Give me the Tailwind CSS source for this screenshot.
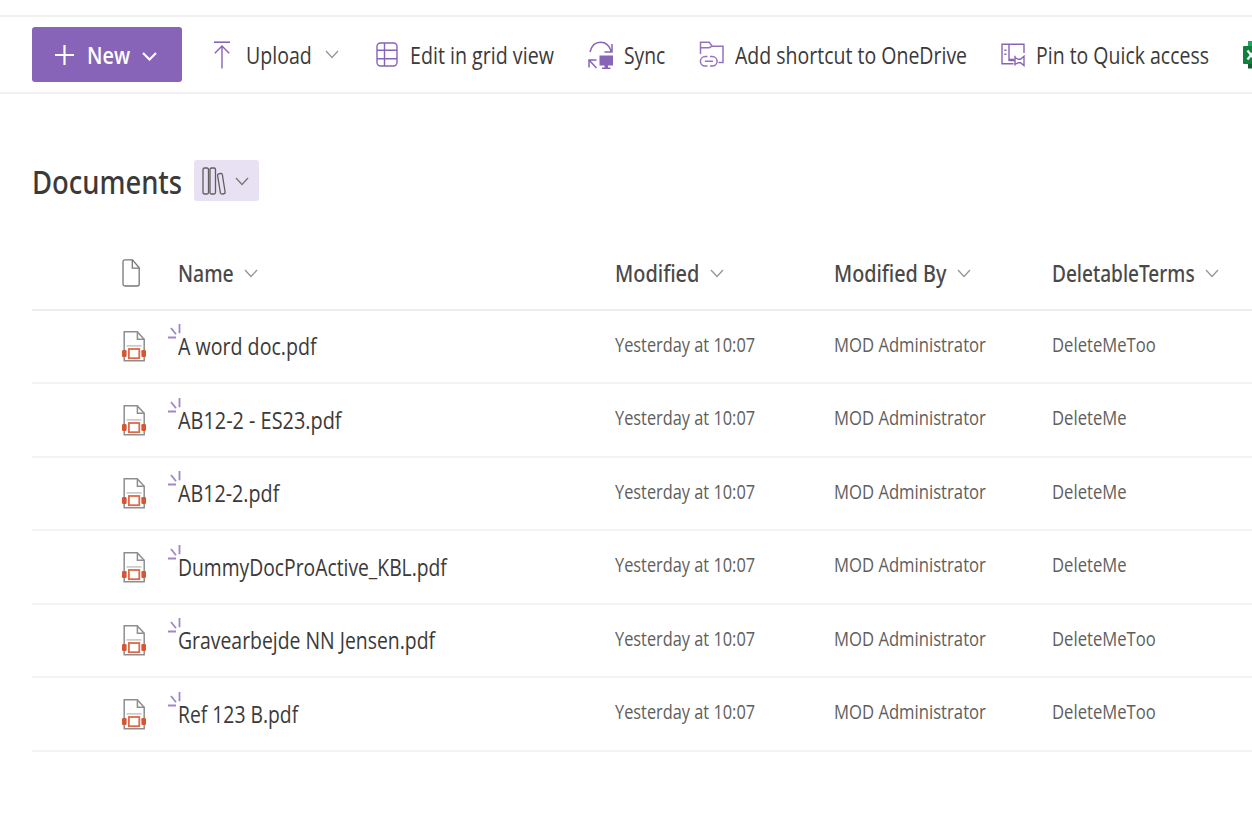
<!DOCTYPE html>
<html lang="en">
<head>
<meta charset="utf-8">
<title>Documents</title>
<script src="https://cdn.jsdelivr.net/npm/@tailwindcss/browser@4"></script>
</head>
<body class="h-[832px] w-[1252px] overflow-hidden bg-white font-['Open_Sans','Noto_Sans',sans-serif] text-[23px] leading-8 text-[#3b3a39]">

<svg class="hidden">
  <symbol id="chev" viewBox="0 0 14 9"><path d="M1 1l6 6.500L13 1" fill="none" stroke="currentColor" stroke-width="1.300"/></symbol>
  <symbol id="pdf" viewBox="0 0 26 32">
    <path d="M3.200 1.700h13l7 7.600v21.500h-20z" fill="#fff" stroke="#8e8e8e" stroke-width="1.500"/>
    <path d="M16.400 1.700v7.600h6.800" fill="none" stroke="#8e8e8e" stroke-width="1.500"/>
    <path d="M5.500 15.900h15" stroke="#c0c0c0" stroke-width="1.400"/>
    <rect x="1" y="20" width="4.600" height="7" rx="1.200" fill="#d65532"/>
    <rect x="20.400" y="20" width="4.600" height="7" rx="1.200" fill="#d65532"/>
    <rect x="7.900" y="19" width="10.400" height="9.200" fill="#fff" stroke="#dc6a49" stroke-width="1.800"/>
  </symbol>
  <symbol id="fresh" viewBox="0 0 14 15"><path d="M0 13.500h8M3 4l5 6.200M11.500 0v9.200" fill="none" stroke="#a085c8" stroke-width="1.800"/></symbol>
</svg>

<div class="h-[15px]"></div>
<nav class="flex h-[79px] items-center border-y-2 border-[#f0f0f0] pl-8">
  <button class="mr-[31px] flex h-[55px] w-[150px] shrink-0 items-center rounded-[3px] bg-[#8764b8] pl-[23px] font-semibold text-white">
    <svg class="h-5 w-[19px]" viewBox="0 0 19 20"><path d="M9.500 0v20M0 10h19" stroke="currentColor" stroke-width="2.200"/></svg>
    <span class="ml-[13px] w-[55px] text-left"><span class="inline-block origin-left scale-x-[.86] whitespace-nowrap">New</span></span>
    <svg class="mt-1 h-[9px] w-[15px]" viewBox="0 0 15 9"><path d="M1 1l6.500 6.500L14 1" fill="none" stroke="currentColor" stroke-width="2.200"/></svg>
  </button>
  <div class="flex w-[163px] shrink-0 items-center">
    <svg class="h-7 w-[18px] shrink-0 text-[#8764b8]" viewBox="0 0 18 28"><path d="M1 1.200h16" stroke="currentColor" stroke-width="1.600"/><path d="M9 27.500V5.500M1.800 12.200L9 5l7.200 7.200" fill="none" stroke="currentColor" stroke-width="1.400"/></svg>
    <span class="ml-[15px] w-[79px]"><span class="inline-block origin-left scale-x-[.85] whitespace-nowrap">Upload</span></span>
    <svg class="h-[9px] w-[14px] shrink-0 text-[#979593]"><use href="#chev"/></svg>
  </div>
  <div class="flex w-[212px] shrink-0 items-center">
    <svg class="h-[25px] w-[22px] shrink-0 text-[#8764b8]" viewBox="0 0 22 25" fill="none" stroke="currentColor" stroke-width="1.400"><rect x="1" y="1" width="20" height="23" rx="3.500"/><path d="M1 8.300h20M1 16.700h20M8.500 1v23"/></svg>
    <span class="ml-3"><span class="inline-block origin-left scale-x-[.854] whitespace-nowrap">Edit in grid view</span></span>
  </div>
  <div class="flex w-[111px] shrink-0 items-center">
    <svg class="h-7 w-[25px] shrink-0 text-[#8764b8]" viewBox="0 0 25 28"><g fill="none" stroke="currentColor" stroke-width="1.500"><path d="M2 11C3.500 4.500 7.500 1.200 12.500 1.200c5 0 9 3.300 10.700 9.300M24 3v8h-7.500M1 26.500V19h7.500M1.500 19.500l7 7.500"/></g><path d="M11.500 14.500H25V24.500h-5v2h2.500V28h-8.500v-1.500H16.500v-2h-5z" fill="currentColor"/></svg>
    <span class="ml-[11px]"><span class="inline-block origin-left scale-x-[.84] whitespace-nowrap">Sync</span></span>
  </div>
  <div class="flex w-[302px] shrink-0 items-center">
    <svg class="h-[27px] w-[25px] shrink-0 text-[#9373c0]" viewBox="0 0 25 27" fill="none" stroke="currentColor" stroke-width="1.500"><path d="M1.500 13V1.200h8.700l3 4H24V21.500h-4.500M1.500 6.700h8.700l3-1.600"/><path d="M8.500 15.500H6.200a4.800 4.800 0 0 0 0 9.600h2.300M11 15.500h2.300a4.800 4.800 0 0 1 0 9.600H11M6 20.300h8"/></svg>
    <span class="ml-[11px] w-[240px]"><span class="inline-block w-max origin-left scale-x-[.848] whitespace-nowrap">Add shortcut to OneDrive</span></span>
  </div>
  <div class="flex w-[242px] shrink-0 items-center">
    <svg class="h-[25px] w-[24px] shrink-0 text-[#8764b8]" viewBox="0 0 24 25" fill="none" stroke="currentColor" stroke-width="1.400"><path d="M12.500 21.800H1V2.200h22V11M8 2.200v15.300h5M3.300 8.300h2.200M3.300 12.300h2.200"/><path d="M14 13.800v9.800M14 15.800l3.500 1.500h2l3.500-3v9.200l-3.500-2.800h-2l-3.500 1.500M7.500 18.500h6.500"/></svg>
    <span class="ml-[11px] w-[200px]"><span class="inline-block origin-left scale-x-[.847] whitespace-nowrap">Pin to Quick access</span></span>
  </div>
  <svg class="h-7 w-[25px] shrink-0" viewBox="0 0 25 28"><path d="M5 0h20v9H5z" fill="#21a366"/><path d="M5 9h20v10H5z" fill="#107c41"/><path d="M5 19h20v8.500H5z" fill="#185c37"/><rect y="5" width="17" height="18" rx="1" fill="#10803f"/><path d="M4.500 9.500l7 9M11.500 9.500l-7 9" stroke="#fff" stroke-width="2.200"/></svg>
</nav>

<header class="mt-[66px] flex h-[41px] items-center pl-[31.500px]">
  <h1 class="w-[162.500px] font-['Noto_Sans'] text-[32px] leading-[41px] font-medium text-[#3b3a39]"><span class="inline-block origin-left scale-x-[.857] whitespace-nowrap pt-0.5">Documents</span></h1>
  <button class="flex h-[41px] w-[65px] items-center rounded-[3px] bg-[#e8e0f3] pl-2">
    <svg class="h-7 w-[25px] shrink-0 text-[#605e5c]" viewBox="0 0 25 28" fill="none" stroke="currentColor" stroke-width="1.300"><rect x="1" y="1" width="5.500" height="26" rx="1.500"/><rect x="8" y="1" width="5.500" height="26" rx="1.500"/><rect x="17" y="6.500" width="4.800" height="20.500" rx="1.500" transform="rotate(-9 19.400 17)"/></svg>
    <svg class="mt-0.5 ml-2 h-[9px] w-[14px] shrink-0 text-[#797775]"><use href="#chev"/></svg>
  </button>
</header>

<main class="mt-[37px] ml-8">
  <div class="flex h-[72.500px] items-center border-b-2 border-[#ededed] font-['Noto_Sans'] font-medium text-[#4a4948]">
    <div class="w-[145.500px] pl-[90px]"><svg class="h-7 w-[18px] text-[#797775]" viewBox="0 0 18 28" fill="none" stroke="currentColor" stroke-width="1.300"><path d="M3 .8h7.500l6.700 8V25a2 2 0 0 1-2 2H3a2 2 0 0 1-2-2V2.800a2 2 0 0 1 2-2z"/><path d="M10.300.8v8.400h6.900"/></svg></div>
    <div class="flex w-[437px] items-center"><span class="w-[66px]"><span class="inline-block origin-left scale-x-[.845]">Name</span></span><svg class="h-[9px] w-[14px] text-[#979593]"><use href="#chev"/></svg></div>
    <div class="flex w-[219px] items-center"><span class="w-[95px]"><span class="inline-block origin-left scale-x-[.865]">Modified</span></span><svg class="h-[9px] w-[14px] text-[#979593]"><use href="#chev"/></svg></div>
    <div class="flex w-[218.500px] items-center"><span class="w-[123px]"><span class="inline-block origin-left scale-x-[.86] whitespace-nowrap">Modified By</span></span><svg class="h-[9px] w-[14px] text-[#979593]"><use href="#chev"/></svg></div>
    <div class="flex items-center"><span class="w-[153px]"><span class="inline-block origin-left scale-x-[.828]">DeletableTerms</span></span><svg class="h-[9px] w-[14px] text-[#979593]"><use href="#chev"/></svg></div>
  </div>
  <div id="rows"></div>
</main>

<template id="row">
  <div class="flex h-[73.500px] items-center border-b-2 border-[#f3f3f3]">
    <div class="w-[145.500px] pl-[89px]"><svg class="h-8 w-[26px]"><use href="#pdf"/></svg></div>
    <div class="relative w-[437.500px] text-[#3b3a39]"><svg class="absolute -top-[6px] -left-[9.500px] h-[15px] w-[14px]"><use href="#fresh"/></svg><span data-f="name" class="inline-block origin-left whitespace-nowrap"></span></div>
    <div class="w-[219px] pb-[5px] text-[20.500px] text-[#605e5c]"><span class="inline-block origin-left scale-x-[.797] whitespace-nowrap">Yesterday at 10:07</span></div>
    <div class="w-[218px] pb-[5px] text-[20.500px] text-[#605e5c]"><span class="inline-block origin-left scale-x-[.813] whitespace-nowrap">MOD Administrator</span></div>
    <div class="pb-[5px] text-[20.500px] text-[#605e5c]"><span data-f="term" class="inline-block origin-left scale-x-[.812] whitespace-nowrap"></span></div>
  </div>
</template>
<script>
  // name, term, horizontal scale of the name
  const files = [
    ["A word doc.pdf", "DeleteMeToo", .853],
    ["AB12-2 - ES23.pdf", "DeleteMe", .864],
    ["AB12-2.pdf", "DeleteMe", .857],
    ["DummyDocProActive_KBL.pdf", "DeleteMe", .839],
    ["Gravearbejde NN Jensen.pdf", "DeleteMeToo", .843],
    ["Ref 123 B.pdf", "DeleteMeToo", .84],
  ];
  for (const [name, term, sx] of files) {
    const r = document.getElementById("row").content.cloneNode(true);
    const n = r.querySelector('[data-f="name"]');
    n.textContent = name;
    n.style.transform = `scaleX(${sx})`;
    r.querySelector('[data-f="term"]').textContent = term;
    document.getElementById("rows").append(r);
  }
</script>
</body>
</html>
